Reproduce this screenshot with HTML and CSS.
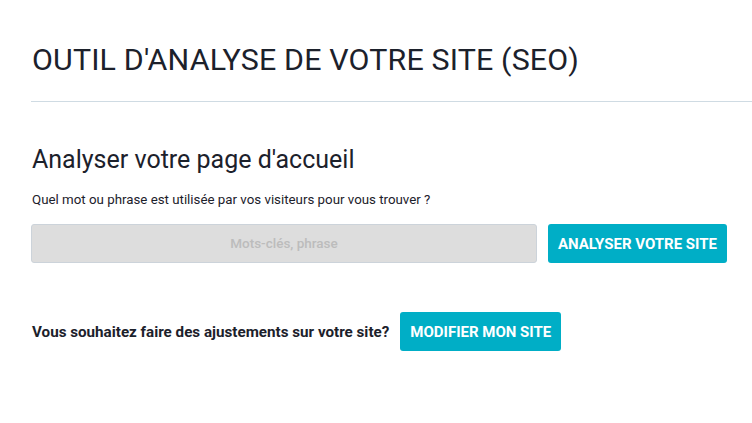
FILE: index.html
```html
<!DOCTYPE html>
<html lang="fr">
<head>
	<meta charset="UTF-8">
	<title>Outil d'analyse SEO</title>
	<link rel="stylesheet" href="styles.css">
</head>
<body>
	<div class="page">
		<h1>OUTIL D'ANALYSE DE VOTRE SITE (SEO)</h1>
		<hr class="sep">

		<h2>Analyser votre page d'accueil</h2>
		<p class="hint">Quel mot ou phrase est utilisée par vos visiteurs pour vous trouver ?</p>
		<form class="search" onsubmit="return false;">
			<input type="text" class="field" placeholder="Mots-clés, phrase">
			<button type="submit" class="btn">ANALYSER VOTRE SITE</button>
		</form>

		<div class="edit">
			<span class="edit-text">Vous souhaitez faire des ajustements sur votre site?</span>
			<a href="#" class="btn">MODIFIER MON SITE</a>
		</div>
	</div>
</body>
</html>
```

FILE: styles.css
```css
*{
	margin: 0;
	padding: 0;
	box-sizing: border-box;
}
body{
	font-family: Roboto, "Liberation Sans", sans-serif;
	color: #1c212b;
	background: #fff;
}
.page{
	padding: 40px 0 0 32px;
}
h1{
	font-size: 30.4px;
	font-weight: 400;
	line-height: 40px;
	letter-spacing: .15px;
}
.sep{
	border: 0;
	border-top: 1px solid #cfdbe3;
	margin: 21px 0 0 -1px;
}
h2{
	font-size: 25px;
	font-weight: 400;
	line-height: 28px;
	margin-top: 44px;
}
.hint{
	font-size: 13.3px;
	line-height: 16px;
	margin-top: 18px;
}
.search{
	display: flex;
	gap: 11px;
	margin-top: 16px;
	margin-left: -1px;
}
.field{
	width: 506px;
	height: 39px;
	background: #dddddd;
	border: 1px solid #ccd3da;
	border-radius: 3px;
	font: 13px Roboto, "Liberation Sans", sans-serif;
	text-align: center;
	color: #333;
}
.field::placeholder{
	color: #bcbcbc;
	font-weight: 500;
	font-size: 13.5px;
}
.btn{
	display: inline-flex;
	align-items: center;
	height: 39px;
	padding: 0 10px;
	background: #00aec6;
	color: #fff;
	border: 0;
	border-radius: 3px;
	font: 700 15px Roboto, "Liberation Sans", sans-serif;
	letter-spacing: 0;
	text-decoration: none;
	cursor: pointer;
}
.edit{
	display: flex;
	align-items: center;
	gap: 11px;
	margin-top: 49px;
}
.edit-text{
	font-size: 15.2px;
	font-weight: 700;
}
```
